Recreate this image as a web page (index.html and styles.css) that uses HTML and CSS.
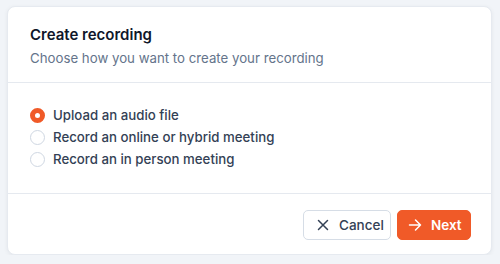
FILE: index.html
```html
<!DOCTYPE html>
<html lang="en">
<head>
<meta charset="utf-8">
<title>Create recording</title>
<link rel="stylesheet" href="styles.css">
</head>
<body>
<div class="page">
  <section class="dialog">
    <header class="dialog-header">
      <h1 class="title">Create recording</h1>
      <p class="subtitle">Choose how you want to create your recording</p>
    </header>
    <div class="options">
      <label class="option">
        <span class="radio checked"></span>
        <span class="option-label">Upload an audio file</span>
      </label>
      <label class="option">
        <span class="radio"></span>
        <span class="option-label">Record an online or hybrid meeting</span>
      </label>
      <label class="option">
        <span class="radio"></span>
        <span class="option-label">Record an in person meeting</span>
      </label>
    </div>
    <footer class="dialog-footer">
      <button class="btn btn-secondary" type="button">
        <svg class="icon" viewBox="0 0 16 16" width="16" height="16" aria-hidden="true"><path d="M3.5 3.5l9 9M12.5 3.5l-9 9" fill="none" stroke="currentColor" stroke-width="1.5" stroke-linecap="round"/></svg>
        <span>Cancel</span>
      </button>
      <button class="btn btn-primary" type="button">
        <svg class="icon" viewBox="0 0 16 16" width="16" height="16" aria-hidden="true"><path d="M2.5 8h11M8.5 3l5 5-5 5" fill="none" stroke="currentColor" stroke-width="1.5" stroke-linecap="round" stroke-linejoin="round"/></svg>
        <span>Next</span>
      </button>
    </footer>
  </section>
</div>
</body>
</html>
```

FILE: styles.css
```css
* { box-sizing: border-box; }
html, body { margin: 0; padding: 0; }
body {
  background: #f1f4f8;
  font-family: Inter, "Noto Sans", "Liberation Sans", sans-serif;
  color: #334155;
}
.page {
  padding: 6px 8px 0 7px;
}
.dialog {
  background: #ffffff;
  border: 1px solid #e6eaf0;
  border-radius: 8px;
  box-shadow: 0 1px 4px rgba(15, 23, 42, 0.06);
  height: 249px;
  display: flex;
  flex-direction: column;
}
.dialog-header {
  padding: 16px 22px 14px;
  border-bottom: 1px solid #e5e9ef;
}
.title {
  margin: 0;
  font-size: 15px;
  line-height: 24px;
  font-weight: 600;
  color: #0f172a;
}
.subtitle {
  margin: 1px 0 0;
  font-size: 13.25px;
  line-height: 20px;
  color: #64748b;
}
.options {
  padding: 21px 22px 23px;
  display: flex;
  flex-direction: column;
}
.option {
  display: flex;
  align-items: center;
  gap: 8px;
  height: 22px;
}
.radio {
  width: 15px;
  height: 15px;
  border-radius: 50%;
  border: 1px solid #cfd7e2;
  background: #fff;
  flex: none;
}
.radio.checked {
  border: 5px solid #f05a28;
}
.option-label {
  font-size: 13.25px;
  line-height: 20px;
  font-weight: 500;
  color: #334155;
}
.dialog-footer {
  border-top: 1px solid #e5e9ef;
  padding: 16px 20px 0;
  display: flex;
  justify-content: flex-end;
  gap: 6px;
}
.btn {
  display: inline-flex;
  align-items: center;
  gap: 8px;
  height: 30px;
  border-radius: 5px;
  font-family: inherit;
  font-size: 13.5px;
  font-weight: 500;
  cursor: pointer;
}
.btn .icon { flex: none; }
.btn-secondary {
  background: #fff;
  border: 1px solid #d6dde6;
  color: #334155;
  padding: 0 10px 0 11px;
  width: 88px;
}
.btn-primary {
  background: #f05a28;
  border: 1px solid #f05a28;
  color: #fff;
  font-weight: 600;
  padding: 0 12px 0 9px;
  width: 74px;
}
```
